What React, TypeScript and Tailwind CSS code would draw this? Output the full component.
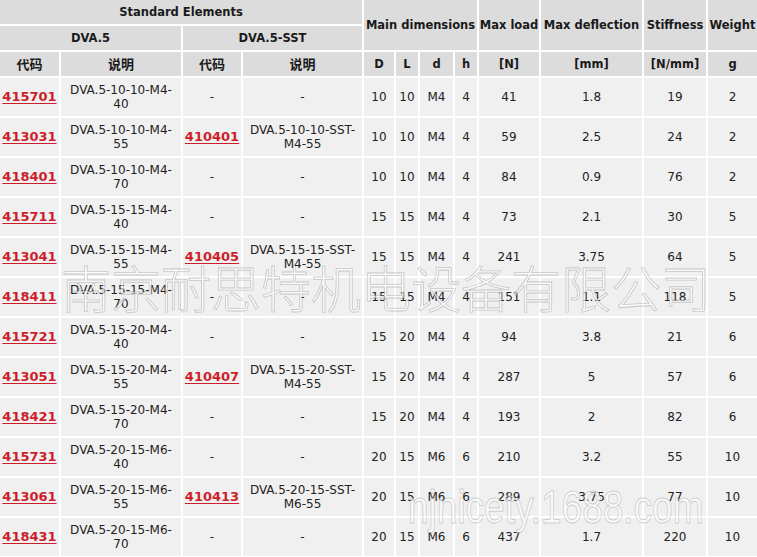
import React from "react";

type Row = {
  code: string;
  desc: [string, string];
  sst?: { code: string; desc: [string, string] };
  D: number;
  L: number;
  d: string;
  h: number;
  load: number;
  defl: string;
  stiff: number;
  g: number;
};

const rows: Row[] = [
  { code: "415701", desc: ["DVA.5-10-10-M4-", "40"], D: 10, L: 10, d: "M4", h: 4, load: 41, defl: "1.8", stiff: 19, g: 2 },
  { code: "413031", desc: ["DVA.5-10-10-M4-", "55"], sst: { code: "410401", desc: ["DVA.5-10-10-SST-", "M4-55"] }, D: 10, L: 10, d: "M4", h: 4, load: 59, defl: "2.5", stiff: 24, g: 2 },
  { code: "418401", desc: ["DVA.5-10-10-M4-", "70"], D: 10, L: 10, d: "M4", h: 4, load: 84, defl: "0.9", stiff: 76, g: 2 },
  { code: "415711", desc: ["DVA.5-15-15-M4-", "40"], D: 15, L: 15, d: "M4", h: 4, load: 73, defl: "2.1", stiff: 30, g: 5 },
  { code: "413041", desc: ["DVA.5-15-15-M4-", "55"], sst: { code: "410405", desc: ["DVA.5-15-15-SST-", "M4-55"] }, D: 15, L: 15, d: "M4", h: 4, load: 241, defl: "3.75", stiff: 64, g: 5 },
  { code: "418411", desc: ["DVA.5-15-15-M4-", "70"], D: 15, L: 15, d: "M4", h: 4, load: 151, defl: "1.1", stiff: 118, g: 5 },
  { code: "415721", desc: ["DVA.5-15-20-M4-", "40"], D: 15, L: 20, d: "M4", h: 4, load: 94, defl: "3.8", stiff: 21, g: 6 },
  { code: "413051", desc: ["DVA.5-15-20-M4-", "55"], sst: { code: "410407", desc: ["DVA.5-15-20-SST-", "M4-55"] }, D: 15, L: 20, d: "M4", h: 4, load: 287, defl: "5", stiff: 57, g: 6 },
  { code: "418421", desc: ["DVA.5-15-20-M4-", "70"], D: 15, L: 20, d: "M4", h: 4, load: 193, defl: "2", stiff: 82, g: 6 },
  { code: "415731", desc: ["DVA.5-20-15-M6-", "40"], D: 20, L: 15, d: "M6", h: 6, load: 210, defl: "3.2", stiff: 55, g: 10 },
  { code: "413061", desc: ["DVA.5-20-15-M6-", "55"], sst: { code: "410413", desc: ["DVA.5-20-15-SST-", "M6-55"] }, D: 20, L: 15, d: "M6", h: 6, load: 289, defl: "3.75", stiff: 77, g: 10 },
  { code: "418431", desc: ["DVA.5-20-15-M6-", "70"], D: 20, L: 15, d: "M6", h: 6, load: 437, defl: "1.7", stiff: 220, g: 10 },
];

const th = "flex items-center justify-center pt-[2px] bg-[#dcdcdc] text-[11.5px] font-bold text-[#1a1a1a] whitespace-nowrap";
const thCjk = "flex items-center justify-center pt-[2px] bg-[#dcdcdc] text-[13px] font-bold text-[#1a1a1a] whitespace-nowrap";
const td = "flex items-center justify-center bg-[#f0f0f0] text-[12px] leading-[14px] text-[#222] text-center whitespace-nowrap";

function Code({ value }: { value: string }) {
  return (
    <a href="#" className="text-[13px] font-bold text-[#cc1f2b] underline underline-offset-2">
      {value}
    </a>
  );
}

function Desc({ lines }: { lines: [string, string] }) {
  return (
    <span>
      {lines[0]}
      <br />
      {lines[1]}
    </span>
  );
}

export default function App() {
  return (
    <div className="relative w-[757px] h-[557px] overflow-hidden bg-white font-['DejaVu_Sans','Noto_Sans_CJK_SC',sans-serif]">
      <div className="grid grid-cols-[59px_120px_58px_119px_30px_22px_33px_22px_60px_101px_62px_49px] grid-rows-[24px_24px_24px_repeat(12,38px)] gap-[2px]">
        <div className={`${th} col-span-4`}>Standard Elements</div>
        <div className={`${th} col-span-4 row-span-2`}>Main dimensions</div>
        <div className={`${th} row-span-2`}>Max load</div>
        <div className={`${th} row-span-2`}>Max deflection</div>
        <div className={`${th} row-span-2`}>Stiffness</div>
        <div className={`${th} row-span-2`}>Weight</div>
        <div className={`${th} col-span-2`}>DVA.5</div>
        <div className={`${th} col-span-2`}>DVA.5-SST</div>
        <div className={thCjk}>代码</div>
        <div className={thCjk}>说明</div>
        <div className={thCjk}>代码</div>
        <div className={thCjk}>说明</div>
        <div className={th}>D</div>
        <div className={th}>L</div>
        <div className={th}>d</div>
        <div className={th}>h</div>
        <div className={th}>[N]</div>
        <div className={th}>[mm]</div>
        <div className={th}>[N/mm]</div>
        <div className={th}>g</div>
        {rows.map((r) => (
          <React.Fragment key={r.code}>
            <div className={td}>
              <Code value={r.code} />
            </div>
            <div className={td}>
              <Desc lines={r.desc} />
            </div>
            <div className={td}>{r.sst ? <Code value={r.sst.code} /> : "-"}</div>
            <div className={td}>{r.sst ? <Desc lines={r.sst.desc} /> : "-"}</div>
            <div className={td}>{r.D}</div>
            <div className={td}>{r.L}</div>
            <div className={td}>{r.d}</div>
            <div className={td}>{r.h}</div>
            <div className={td}>{r.load}</div>
            <div className={td}>{r.defl}</div>
            <div className={td}>{r.stiff}</div>
            <div className={td}>{r.g}</div>
          </React.Fragment>
        ))}
      </div>

      {/* watermarks */}
      <div className="pointer-events-none absolute left-[61px] top-[261px] whitespace-nowrap font-['Noto_Sans_CJK_SC',sans-serif] text-[50px] font-light leading-none text-white/60 [-webkit-text-stroke:0.8px_rgba(110,110,110,0.35)]">
        南京耐思特机电设备有限公司
      </div>
      <div className="pointer-events-none absolute left-[408px] top-[484px] origin-top scale-y-125 whitespace-nowrap font-['Liberation_Sans',sans-serif] text-[37px] leading-none text-white/60 [-webkit-text-stroke:0.8px_rgba(110,110,110,0.3)]">
        njnicety.1688.com
      </div>
    </div>
  );
}
